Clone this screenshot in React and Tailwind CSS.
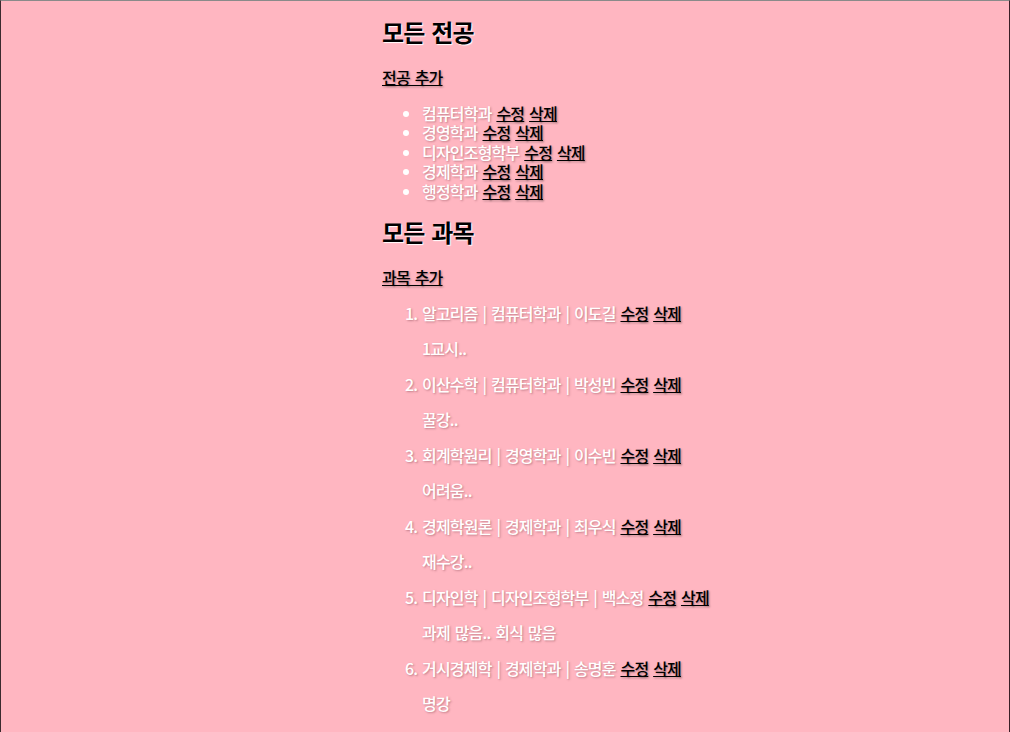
const majors = ['컴퓨터학과', '경영학과', '디자인조형학부', '경제학과', '행정학과'];

const courses = [
  { name: '알고리즘', major: '컴퓨터학과', prof: '이도길', note: '1교시..' },
  { name: '이산수학', major: '컴퓨터학과', prof: '박성빈', note: '꿀강..' },
  { name: '회계학원리', major: '경영학과', prof: '이수빈', note: '어려움..' },
  { name: '경제학원론', major: '경제학과', prof: '최우식', note: '재수강..' },
  { name: '디자인학', major: '디자인조형학부', prof: '백소정', note: '과제 많음.. 회식 많음' },
  { name: '거시경제학', major: '경제학과', prof: '송명훈', note: '명강' },
];

const Actions = () => (
  <>
    {' '}
    <a href="#" className="text-black underline [text-shadow:1px_1px_2px_rgba(0,0,0,0.35)]">수정</a>{' '}
    <a href="#" className="text-black underline [text-shadow:1px_1px_2px_rgba(0,0,0,0.35)]">삭제</a>
  </>
);

export default function App() {
  return (
    <div className="min-h-[732px] bg-[#ffb6c1] border-t border-t-[#8a8a8a] border-l border-l-[#3a2a2e] border-r border-r-[#3a1f27] font-['Noto_Sans_CJK_KR',sans-serif] text-[16px] leading-[19.5px] tracking-[-0.8px] [word-spacing:2px] font-medium text-white [text-shadow:1px_1px_2px_rgba(120,60,70,0.45)]">
      <div className="ml-[381px] pt-[1px]">
        <h2 className="mt-[15px] mb-[22px] text-[24px] leading-[29px] font-bold text-black [text-shadow:1px_1px_1px_#fff]">모든 전공</h2>
        <p className="my-4"><a href="#" className="text-black underline [text-shadow:1px_1px_2px_rgba(0,0,0,0.35)]">전공 추가</a></p>
        <ul className="list-disc pl-10 my-4">
          {majors.map((m) => (
            <li key={m}>{m}<Actions /></li>
          ))}
        </ul>
        <h2 className="mt-[16px] mb-[22px] text-[24px] leading-[29px] font-bold text-black [text-shadow:1px_1px_1px_#fff]">모든 과목</h2>
        <p className="my-4"><a href="#" className="text-black underline [text-shadow:1px_1px_2px_rgba(0,0,0,0.35)]">과목 추가</a></p>
        <ol className="list-decimal pl-10 my-4">
          {courses.map((c) => (
            <li key={c.name}>
              {c.name} | {c.major} | {c.prof}<Actions />
              <p className="my-4">{c.note}</p>
            </li>
          ))}
        </ol>
      </div>
    </div>
  );
}
